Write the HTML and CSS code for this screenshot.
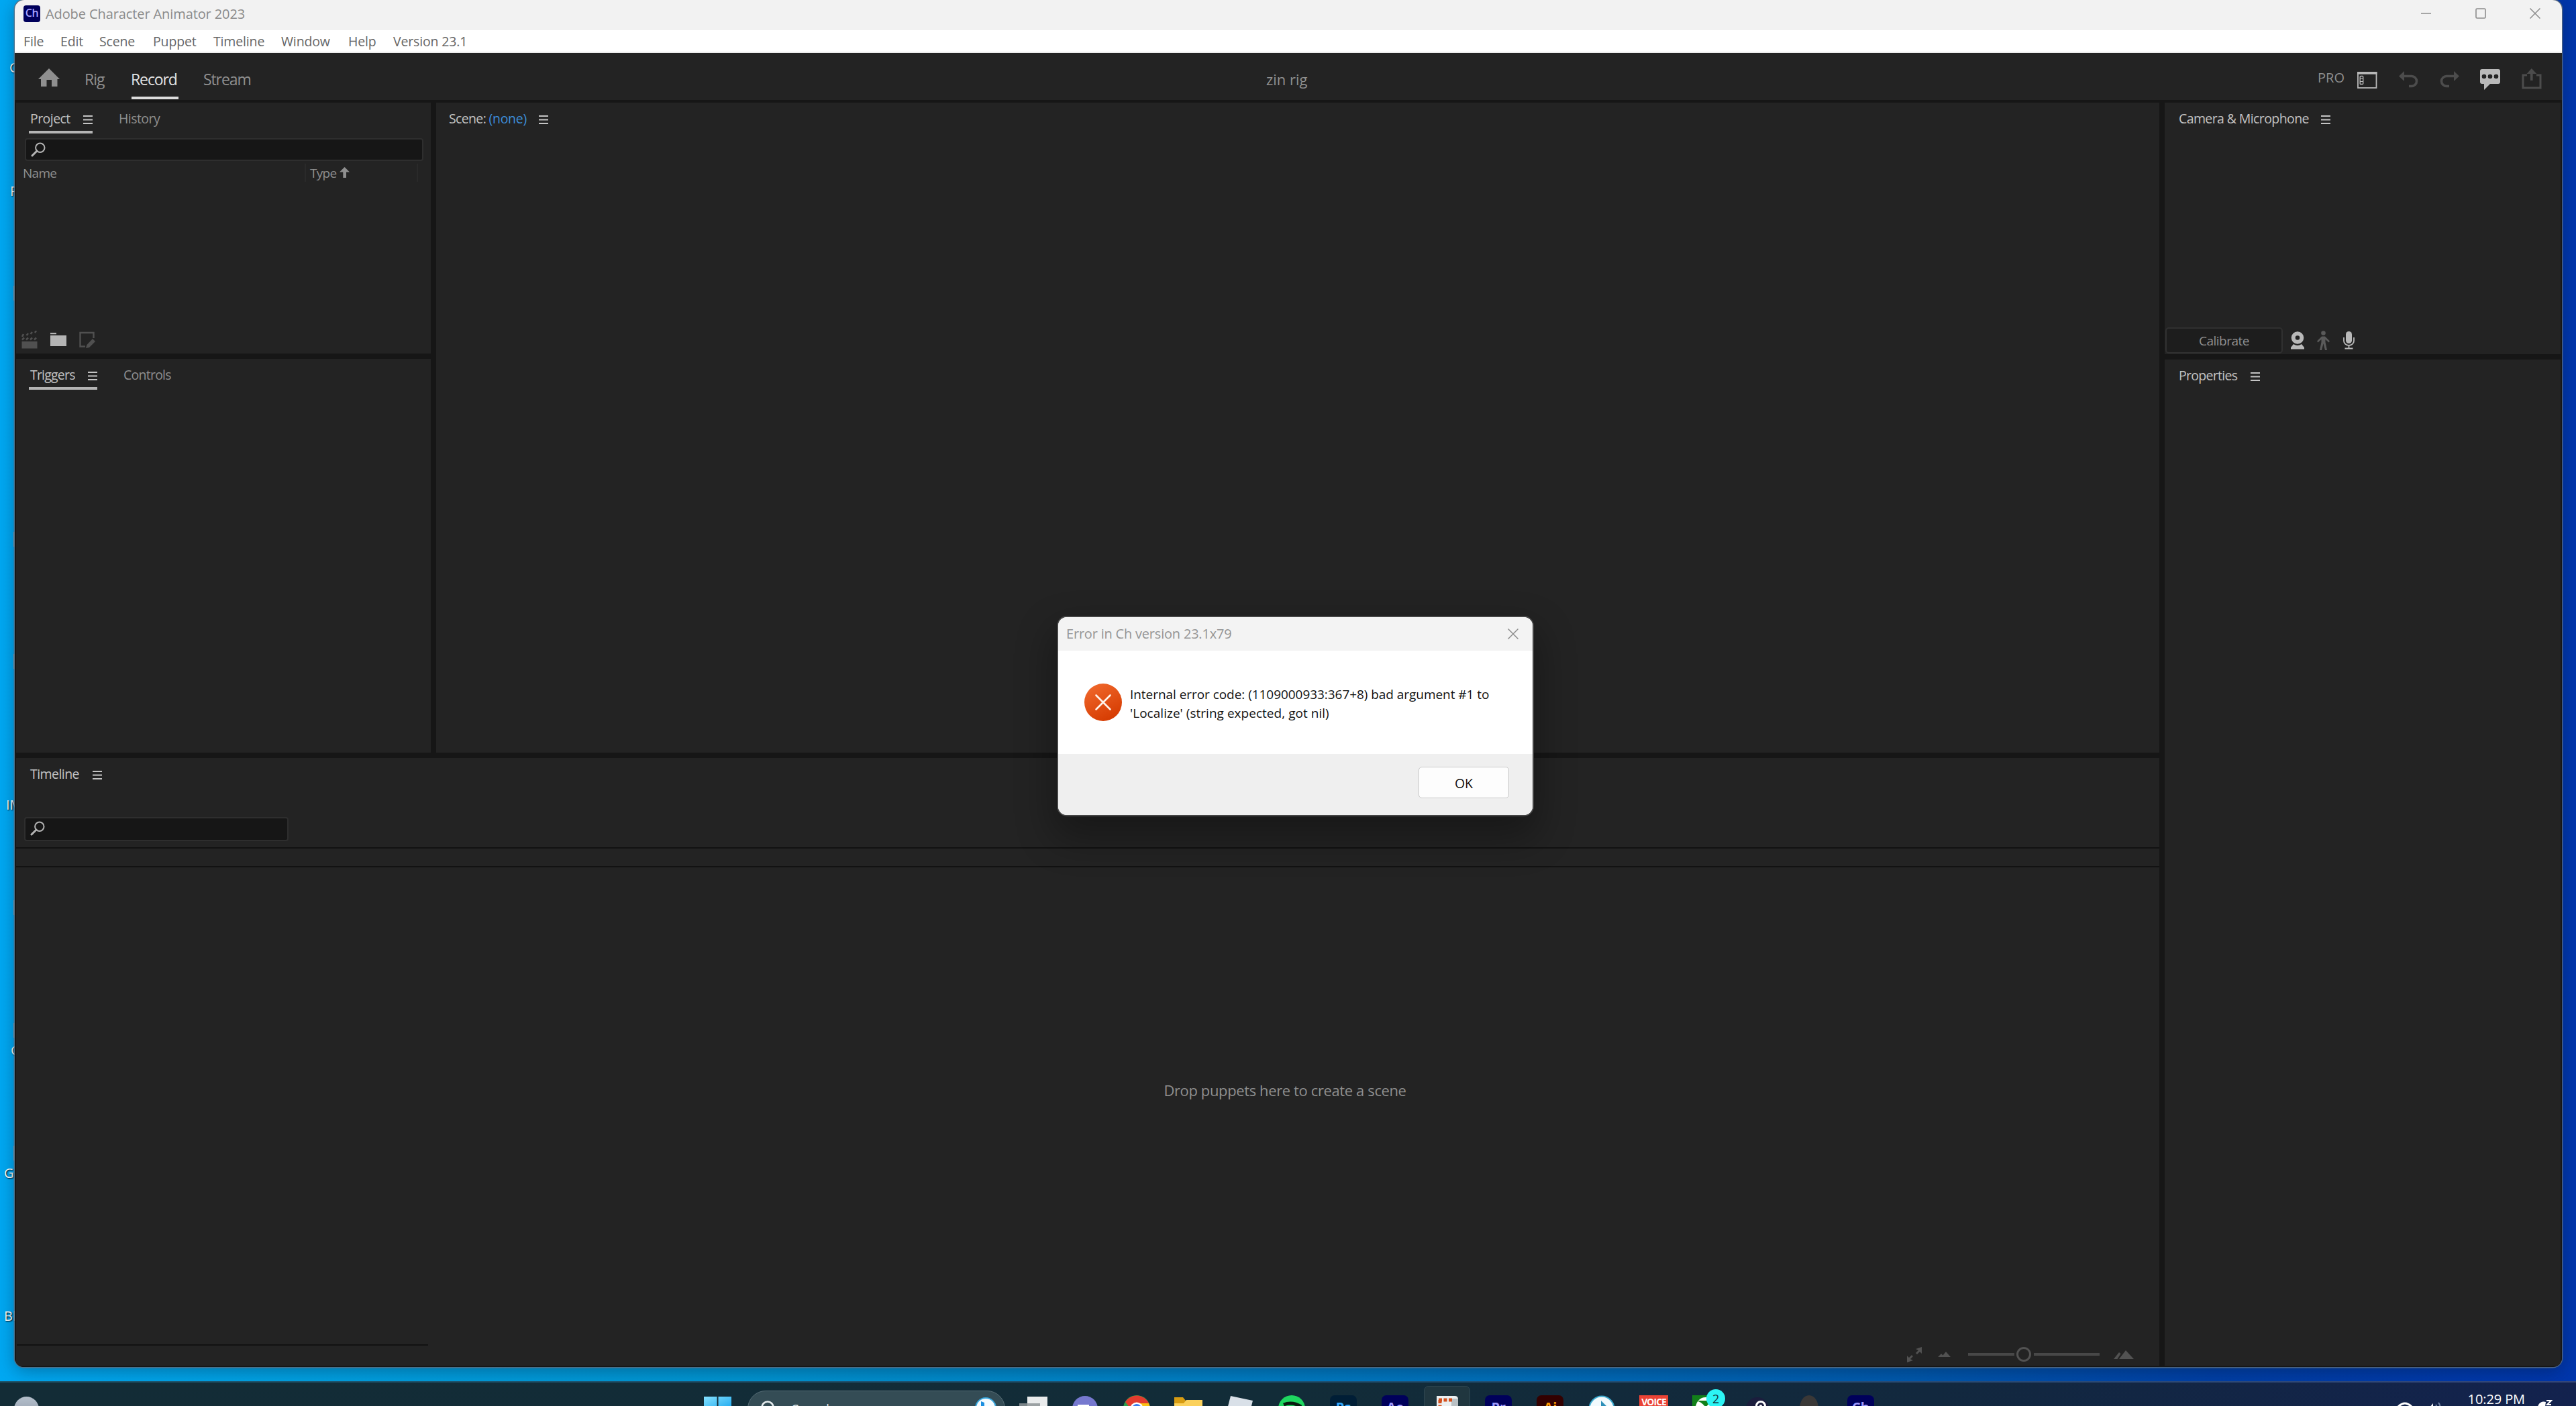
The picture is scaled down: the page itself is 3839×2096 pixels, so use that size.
FILE: index.html
```
<!DOCTYPE html>
<html lang="en">
<head>
    <meta charset="UTF-8">
    <meta name="viewport" content="width=device-width, initial-scale=1.0">
    <title>Adobe Character Animator 2023</title>
    <link rel="stylesheet" href="styles.css">
</head>
<body>
    <svg class="defs" width="0" height="0">
        <symbol id="menu" viewBox="0 0 14 13">
            <path d="M0 1h14M0 6.5h14M0 12h14" stroke="currentColor" stroke-width="1.8"/>
        </symbol>
        <symbol id="search" viewBox="0 0 22 22">
            <ellipse cx="13.8" cy="8.3" rx="6.7" ry="6.7" fill="none" stroke="#b4b4b4" stroke-width="2"/>
            <path d="M9 13L2 20" stroke="#b4b4b4" stroke-width="3" stroke-linecap="round"/>
        </symbol>
    </svg>

    <div class="desktop">
        <!-- desktop shortcut labels, mostly hidden by the window -->
        <span class="shortcut s1">C</span>
        <span class="shortcut s2">P</span>
        <span class="shortcut s3">IM</span>
        <span class="shortcut s4">G</span>
        <span class="shortcut s5">Gr</span>
        <span class="shortcut s6">Bl</span>
        <i class="tick t1"></i>
        <i class="tick t2"></i>
        <i class="tick t3"></i>
        <i class="tick t4"></i>
        <i class="tick t5"></i>
        <i class="tick t6"></i>

        <div class="window">
            <header class="titlebar">
                <span class="app-icon">Ch</span>
                <span class="app-title">Adobe Character Animator 2023</span>
                <div class="window-buttons">
                    <svg width="16" height="16"><path d="M0 8h15" stroke="#8c8c8c" stroke-width="1.4"/></svg>
                    <svg width="16" height="16"><rect x="1" y="1" width="14" height="14" rx="1.5" fill="none" stroke="#8c8c8c" stroke-width="1.6"/></svg>
                    <svg width="16" height="16"><path d="M0.5 0.5l15 15M15.5 0.5l-15 15" stroke="#8c8c8c" stroke-width="1.5"/></svg>
                </div>
            </header>

            <nav class="menubar">
                <span class="m-file">File</span>
                <span class="m-edit">Edit</span>
                <span class="m-scene">Scene</span>
                <span class="m-puppet">Puppet</span>
                <span class="m-timeline">Timeline</span>
                <span class="m-window">Window</span>
                <span class="m-help">Help</span>
                <span>Version 23.1</span>
            </nav>

            <div class="toolbar">
                <svg class="home" width="32" height="28" viewBox="0 0 32 28">
                    <path d="M16 0L32 16H28.5V27H20V17h-7.500v10H4V16H0z" fill="#8f8f8f"/>
                </svg>
                <span class="mode rig">Rig</span>
                <span class="mode record active">Record</span>
                <span class="mode stream">Stream</span>
                <span class="project-name">zin rig</span>
                <div class="tools">
                    <span class="pro">PRO</span>
                    <svg class="t-layout" width="30" height="25" viewBox="0 0 30 25">
                        <rect x="1" y="1" width="27.500" height="23" fill="none" stroke="#b9b9b9" stroke-width="1.8"/>
                        <path d="M0 2h29.500" stroke="#b9b9b9" stroke-width="3.500"/>
                        <rect x="4.200" y="6.500" width="4.500" height="12" rx="1" fill="none" stroke="#b9b9b9" stroke-width="1.4"/>
                        <path d="M4 10.500h5M4 14.500h5" stroke="#b9b9b9"/>
                    </svg>
                    <svg class="t-undo" width="30" height="25" viewBox="0 0 30 25">
                        <path d="M0 7.500L8 0v15z" fill="#4c4c4c"/>
                        <path d="M7 7.500h12a7.500 7.500 0 0 1 0 15h-4" fill="none" stroke="#4c4c4c" stroke-width="3.600"/>
                    </svg>
                    <svg class="t-redo" width="30" height="25" viewBox="0 0 30 25">
                        <path d="M29 7.500L21 0v15z" fill="#4c4c4c"/>
                        <path d="M22 7.500H10a7.500 7.500 0 0 0 0 15h4" fill="none" stroke="#4c4c4c" stroke-width="3.600"/>
                    </svg>
                    <svg class="t-chat" width="30" height="31" viewBox="0 0 30 31">
                        <path d="M3 0h24q3 0 3 3v16q0 3-3 3H15l-9 9v-9H3q-3 0-3-3V3q0-3 3-3z" fill="#b9b9b9"/>
                        <circle cx="6" cy="11" r="3.300" fill="#232323"/>
                        <circle cx="15" cy="11" r="3.300" fill="#232323"/>
                        <circle cx="24" cy="11" r="3.300" fill="#232323"/>
                    </svg>
                    <svg class="t-share" width="30" height="31" viewBox="0 0 30 31">
                        <path d="M8 10H2v19h26V10h-6" fill="none" stroke="#4c4c4c" stroke-width="3"/>
                        <path d="M14.800 18V5" stroke="#4c4c4c" stroke-width="3.600"/>
                        <path d="M7.500 8L14.800 0l7.500 8z" fill="#4c4c4c"/>
                    </svg>
                </div>
            </div>

            <main class="workspace">
                <div class="main-column">
                    <div class="upper">
                        <div class="left-column">
                            <section class="panel project">
                                <div class="tabs">
                                    <span class="tab active tab-project">Project<svg class="burger"><use href="#menu"/></svg></span>
                                    <span class="tab">History</span>
                                </div>
                                <div class="searchbox"><svg><use href="#search"/></svg></div>
                                <div class="columns">
                                    <span class="col-name">Name</span>
                                    <span class="col-type">Type
                                        <svg width="15" height="16" viewBox="0 0 15 16"><path d="M7.500 0L15 7.500h-5V16H5.300V7.500H0z" fill="#8f8f8f"/></svg>
                                    </span>
                                </div>
                                <div class="project-actions">
                                    <svg width="24" height="27" viewBox="0 0 24 27">
                                        <path d="M0.500 16h23v10.500H0.500z" fill="#505050"/>
                                        <path d="M1 13.500l3-3M7 13.500l3-3M13 13.500l3-3M19 13.500l3-3M1 9l2-4M7.500 7l2.500-3M13.500 5l2.500-3M20 3l2-3" stroke="#505050" stroke-width="2.600"/>
                                    </svg>
                                    <svg width="26" height="21" viewBox="0 0 26 21">
                                        <path d="M1 0h9v2.200H1zM1 4h24v16H1z" fill="#b4b4b4"/>
                                    </svg>
                                    <svg width="24" height="25" viewBox="0 0 24 25">
                                        <path d="M9 22.500H1.500V2h20v8" fill="none" stroke="#505050" stroke-width="2.400"/>
                                        <path d="M20 11l4 4-9 9-5 1 1.500-5z" fill="#505050"/>
                                    </svg>
                                </div>
                            </section>
                            <section class="panel triggers">
                                <div class="tabs">
                                    <span class="tab active tab-triggers">Triggers<svg class="burger"><use href="#menu"/></svg></span>
                                    <span class="tab tab-controls">Controls</span>
                                </div>
                            </section>
                        </div>
                        <section class="panel scene">
                            <div class="tabs">
                                <span class="tab light">Scene: <b>(none)</b><svg class="burger"><use href="#menu"/></svg></span>
                            </div>
                        </section>
                    </div>

                    <section class="panel timeline">
                        <div class="tabs">
                            <span class="tab light">Timeline<svg class="burger"><use href="#menu"/></svg></span>
                        </div>
                        <div class="searchbox"><svg><use href="#search"/></svg></div>
                        <div class="ruler"></div>
                        <div class="drop-area">Drop puppets here to create a scene</div>
                        <div class="zoom-bar">
                            <svg class="fit" width="22" height="23" viewBox="0 0 22 23">
                                <path d="M13 3l9-3v10l-3-3-4 4-2-2 4-4zM9 20l-9 3V13l3 3 4-4 2 2-4 4z" fill="#525252"/>
                            </svg>
                            <svg class="zoom-out" width="19" height="8" viewBox="0 0 19 8"><path d="M0 8l5-5 2.500 2.500L12 0l7 8z" fill="#525252"/></svg>
                            <div class="slider"><i></i></div>
                            <svg class="zoom-in" width="30" height="13" viewBox="0 0 30 13"><path d="M0 13L8 3l2.500 2-5 8zM8 13L18 0l12 13z" fill="#525252"/></svg>
                        </div>
                    </section>
                </div>

                <div class="right-column">
                    <section class="panel camera">
                        <div class="tabs">
                            <span class="tab light">Camera &amp; Microphone<svg class="burger"><use href="#menu"/></svg></span>
                        </div>
                        <div class="camera-bar">
                            <button class="calibrate">Calibrate</button>
                            <svg class="webcam" width="20" height="27" viewBox="0 0 20 27">
                                <circle cx="10" cy="9.500" r="6.300" fill="none" stroke="#b9b9b9" stroke-width="6"/>
                                <path d="M4 19q6 4 12 0l4 5v2.500H0V24z" fill="#b9b9b9"/>
                            </svg>
                            <svg class="body" width="19" height="30" viewBox="0 0 19 30">
                                <circle cx="9.500" cy="3.500" r="3.300" fill="#5a5a5a"/>
                                <path d="M7 8.500h5l7 7-1.500 2L12.500 13v4L15 29h-3L9.500 19 7 29H4l2.500-12v-4l-5 4.500L0 15.500z" fill="#5a5a5a"/>
                            </svg>
                            <svg class="mic" width="17" height="27" viewBox="0 0 17 27">
                                <rect x="4" y="0" width="9" height="18" rx="4.500" fill="#b9b9b9"/>
                                <path d="M1 9v5a7.500 7 0 0 0 15 0V9M8.500 21v4M2.500 25.500h12" fill="none" stroke="#b9b9b9" stroke-width="1.800"/>
                            </svg>
                        </div>
                    </section>
                    <section class="panel properties">
                        <div class="tabs">
                            <span class="tab light">Properties<svg class="burger"><use href="#menu"/></svg></span>
                        </div>
                    </section>
                </div>
            </main>
        </div>

        <div class="dialog" role="alertdialog">
            <div class="dialog-title">
                <span>Error in Ch version 23.1x79</span>
                <svg width="16" height="16"><path d="M0.500 0.500l15 15M15.500 0.500l-15 15" stroke="#8c8c8c" stroke-width="1.500"/></svg>
            </div>
            <div class="dialog-body">
                <svg width="56" height="56" viewBox="0 0 56 56">
                    <defs>
                        <linearGradient id="err" x1="0.2" y1="0" x2="0.7" y2="1">
                            <stop offset="0" stop-color="#f0682c"/>
                            <stop offset="1" stop-color="#d53a00"/>
                        </linearGradient>
                    </defs>
                    <circle cx="28" cy="28" r="28" fill="url(#err)"/>
                    <path d="M17.500 17.500l21 21M38.500 17.500l-21 21" stroke="#fff3ea" stroke-width="2.600" stroke-linecap="round"/>
                </svg>
                <p>Internal error code: (1109000933:367+8) bad argument #1 to<br><span>'Localize' (string expected, got nil)</span></p>
            </div>
            <div class="dialog-footer">
                <button class="ok">OK</button>
            </div>
        </div>
    </div>

    <footer class="taskbar">
        <div class="weather"></div>
        <svg class="start" width="41" height="40" viewBox="0 0 41 40">
            <defs>
                <linearGradient id="win" x1="0" y1="0" x2="1" y2="1">
                    <stop offset="0" stop-color="#86e2ff"/>
                    <stop offset="1" stop-color="#1aa6ee"/>
                </linearGradient>
            </defs>
            <path d="M0 1h19.500v19H0zM21.500 1H41v19H21.500z" fill="url(#win)"/>
        </svg>
        <div class="task-search">
            <svg width="24" height="24" viewBox="0 0 24 24"><circle cx="11" cy="10" r="8.500" fill="none" stroke="#e8eef0" stroke-width="2.600"/></svg>
            <span>Search</span>
            <svg class="bing" width="32" height="32" viewBox="0 0 32 32">
                <circle cx="16" cy="16" r="15" fill="#f4fbff" stroke="#36a5dc" stroke-width="2"/>
                <path d="M9 6l5 2v10l7 3-8 5-4-3z" fill="#1b8fe0"/>
            </svg>
        </div>
        <div class="apps">
            <span class="app"><svg width="42" height="40"><path d="M12 2h30v38H12z" fill="#e9ebec"/><path d="M0 12h31v28H0z" fill="#8d9496" opacity=".85"/></svg></span>
            <span class="app"><svg width="40" height="40"><circle cx="20" cy="20" r="19" fill="#7678cf"/><path d="M9 14h17v5H9z" fill="#fff"/></svg></span>
            <span class="app">
                <svg width="40" height="40"><circle cx="20" cy="20" r="20" fill="#2ba24c"/><path d="M3 10A20 20 0 0 1 39 14H20l-6 10z" fill="#e33b2e"/><path d="M20 12h18a20 20 0 0 1 2 10H24z" fill="#fbc116"/><circle cx="20" cy="20" r="9.500" fill="#fff"/><circle cx="20" cy="20" r="7" fill="#3b7ded"/></svg>
            </span>
            <span class="app"><svg width="42" height="40"><path d="M0 3h13l4 5h8v8H0z" fill="#d79c12"/><path d="M0 12h14l4-5h24v33H0z" fill="#fbd15c"/></svg></span>
            <span class="app"><svg width="40" height="40"><path d="M6 1l33 7-8 32H-4z" fill="#d9e0e8"/></svg></span>
            <span class="app"><svg width="40" height="40"><circle cx="20" cy="20" r="20" fill="#1ed760"/><path d="M8 14q13-5 26 3" fill="none" stroke="#0a1a10" stroke-width="5"/></svg></span>
            <span class="app"><span class="adobe ps">Ps</span></span>
            <span class="app"><span class="adobe">Ae</span></span>
            <span class="app current"><svg width="34" height="40"><path d="M2 0h27q5 0 5 5v35H2z" fill="#eceff0"/><path d="M24 4h10v36H24z" fill="#b9c0c4"/><path d="M5 6h20M7 6v20" fill="none" stroke="#d5501c" stroke-width="5" stroke-dasharray="5 2.500"/></svg></span>
            <span class="app"><span class="adobe">Pr</span></span>
            <span class="app"><span class="adobe ai">Ai</span></span>
            <span class="app"><svg width="40" height="40"><circle cx="20" cy="20" r="18.500" fill="#f2fafd" stroke="#3aa9cf" stroke-width="2"/><path d="M7 16h12V8l10 10-10 8z" fill="#2c8fb8"/></svg></span>
            <span class="app"><span class="voice">VOICE</span></span>
            <span class="app">
                <svg width="40" height="40"><path d="M0 0h40v40H0z" fill="#12801a"/><circle cx="20" cy="18" r="15" fill="#fff"/><path d="M6 8q8 2 14 10Q27 9 34 8M9 30l11-13 11 13z" fill="#12801a"/></svg>
                <span class="badge">2</span>
            </span>
            <span class="app"><svg width="40" height="36"><circle cx="20" cy="20" r="17" fill="#1b1d3d"/><circle cx="25" cy="16" r="6.500" fill="none" stroke="#fff" stroke-width="3"/><circle cx="25" cy="16" r="2" fill="#fff"/></svg></span>
            <span class="app"><svg width="30" height="40"><ellipse cx="15" cy="20" rx="14" ry="20" fill="#3a3837"/></svg></span>
            <span class="app"><span class="adobe">Ch</span></span>
        </div>
        <div class="tray">
            <svg class="wifi" width="24" height="20"><path d="M1 8q11-12 22 0M5 13q7-7 14 0" fill="none" stroke="#fff" stroke-width="3"/></svg>
            <svg class="volume" width="22" height="20"><path d="M0 9h3l5-6v17H0z" fill="#fff"/><path d="M12 5q3 4 0 9M16 2q5 6 0 14" fill="none" stroke="#6d7fa0" stroke-width="2"/></svg>
            <span class="clock">10:29 PM</span>
            <svg class="bell" width="22" height="20"><path d="M0 20V11a9 9 0 0 1 12-8l-1 7h8v10z" fill="#fff"/><path d="M13 1h7l-6 6h6" fill="none" stroke="#fff" stroke-width="2"/></svg>
        </div>
    </footer>
</body>
</html>
```
FILE: styles.css
```
* {
    margin: 0;
    padding: 0;
    box-sizing: border-box;
}

body {
    width: 3839px;
    height: 2096px;
    overflow: hidden;
    font-family: "Open Sans", "Noto Sans", sans-serif;
    font-size: 20px;
    background: #0a4fa5;
}

svg {
    display: block;
    flex: none;
}

button {
    font: inherit;
}

.defs {
    position: absolute;
}

.desktop {
    position: relative;
    height: 2059px;
    padding-left: 22px;
    overflow: hidden;
    background: linear-gradient(90deg, #00a8f2 0, #00a2e4 400px, #0095d2 1100px, #0078c0 2000px, #0058ac 2850px, #003fa6 3300px, #0036ac 3839px);
}

/* shortcut labels peeking out at the left edge */
.shortcut {
    position: absolute;
    line-height: 28px;
    color: #fff;
    text-shadow: 1px 1px 2px #000;
}

.s1 { left: 14px; top: 87px; }
.s2 { left: 15px; top: 271px; }
.s3 { left: 9px; top: 1186px; }
.s4 { left: 16px; top: 1552px; }
.s5 { left: 6px; top: 1735px; }
.s6 { left: 6px; top: 1948px; }

.tick {
    position: absolute;
    left: 20px;
    width: 2px;
    height: 22px;
    background: #8fa3ad;
}

.t1 { top: 426px; }
.t2 { top: 793px; }
.t3 { top: 975px; }
.t4 { top: 1342px; }
.t5 { top: 1525px; }
.t6 { top: 1708px; }

.window {
    position: relative;
    width: 3796px;
    height: 2038px;
    border-radius: 14px;
    overflow: hidden;
    background: #161616;
    box-shadow: 0 0 0 1.5px rgba(90, 110, 130, 0.8), 0 6px 26px rgba(0, 20, 40, 0.35);
}

.titlebar {
    display: flex;
    align-items: center;
    height: 45px;
    padding: 0 32px 5px 13px;
    background: #f2f2f2;
    color: #8a8a8a;
}

.app-icon {
    width: 25px;
    height: 25px;
    margin-right: 8px;
    border-radius: 4px;
    background: #00005b;
    color: #a9a3ff;
    font-size: 16px;
    font-weight: 600;
    line-height: 23px;
    text-align: center;
    letter-spacing: -0.5px;
}

.app-title {
    letter-spacing: -0.1px;
}

.window-buttons {
    display: flex;
    gap: 65px;
    margin-left: auto;
}

.menubar {
    display: flex;
    height: 34px;
    padding-left: 13px;
    border-bottom: 2px solid #ececec;
    background: #fff;
    color: #666;
    font-size: 19.500px;
    line-height: 34px;
    letter-spacing: -0.15px;
}

.m-file { width: 55px; }
.m-edit { width: 58px; }
.m-scene { width: 80px; }
.m-puppet { width: 90px; }
.m-timeline { width: 101px; }
.m-window { width: 100px; }
.m-help { width: 67px; }

.toolbar {
    display: flex;
    align-items: flex-start;
    height: 70px;
    padding: 5px 30px 0 35px;
    background: #232323;
    color: #8f8f8f;
    font-size: 23px;
}

.home {
    margin-top: 18px;
}

.mode {
    height: 64px;
    line-height: 69px;
    letter-spacing: -1px;
}

.rig { margin-left: 37px; width: 31px; }
.record { margin-left: 39px; width: 70px; }

.stream {
    width: 70px;
    margin-left: 37px;
    letter-spacing: -1.1px;
}

.mode.active {
    color: #e2e2e2;
    letter-spacing: -1.1px;
    text-indent: -1px;
    box-shadow: inset 0 -4px #dcdcdc;
}

.project-name {
    width: 70px;
    margin-left: 1514px;
    line-height: 69px;
    font-size: 22px;
    letter-spacing: 0;
}

.tools {
    display: flex;
    align-items: flex-start;
    margin-left: auto;
}

.pro {
    margin: -3px 19px 0 0;
    line-height: 69px;
    font-size: 20px;
}

.t-layout { margin: 23px 32px 0 0; }
.t-undo { margin: 22px 31px 0 0; }
.t-redo { margin: 22px 30px 0 0; }
.t-chat { margin: 19px 32px 0 0; }
.t-share { margin-top: 18px; }

.workspace {
    display: flex;
    gap: 8px;
    height: 1889px;
    padding: 4px 2px 2px;
    background: #161616;
}

.main-column {
    display: flex;
    flex-direction: column;
    gap: 8px;
    width: 3194px;
}

.upper {
    display: flex;
    gap: 8px;
    height: 969px;
}

.left-column {
    display: flex;
    flex-direction: column;
    gap: 8px;
    width: 618px;
}

.right-column {
    display: flex;
    flex: 1;
    flex-direction: column;
    gap: 8px;
}

.panel {
    display: flex;
    flex-direction: column;
    background: #232323;
}

.project { height: 374px; }
.triggers, .scene, .timeline, .properties { flex: 1; }
.camera { height: 375px; }

.tabs {
    display: flex;
    height: 46px;
    padding-left: 19px;
    font-size: 19.500px;
    line-height: 47px;
}

.tab {
    display: flex;
    color: #8f8f8f;
    letter-spacing: -0.55px;
    white-space: pre;
}

.tab b {
    color: #3d8fdc;
    font-weight: 400;
    letter-spacing: -0.3px;
}

.tab.active {
    width: 95px;
    padding-left: 2px;
    color: #c4c4c4;
    box-shadow: inset 0 -4px #b4b4b4;
}

.tab-project {
    margin-right: 39px;
}

.tab.tab-triggers {
    width: 102px;
    letter-spacing: -0.8px;
}

.tab-controls {
    margin-left: 39px;
    letter-spacing: -0.75px;
}

.tab.light {
    color: #c4c4c4;
}

.burger {
    width: 14px;
    height: 13px;
    margin: 19px 0 0 auto;
}

.light .burger {
    margin-left: 18px;
}

.scene .tab.light {
    letter-spacing: -0.65px;
}

.timeline .tabs { padding-left: 21px; }
.camera .tabs, .properties .tabs { padding-left: 21px; }
.camera .tab { letter-spacing: -0.6px; }
.properties .tab { letter-spacing: -0.7px; }

.timeline .light .burger,
.properties .light .burger {
    margin-left: 20px;
}

.searchbox {
    width: 594px;
    height: 34px;
    margin: 7px 0 0 13px;
    padding: 4px 0 0 7px;
    border: 2px solid #2e2e2e;
    border-radius: 4px;
    background: #161616;
}

.searchbox svg {
    width: 22px;
    height: 22px;
}

.columns {
    display: flex;
    margin-top: 4px;
    height: 27px;
    padding-left: 10px;
    color: #8f8f8f;
    font-size: 19px;
    line-height: 28px;
    letter-spacing: -0.7px;
}

.col-name {
    width: 420px;
}

.col-type {
    display: flex;
    gap: 5px;
    width: 169px;
    padding-left: 6px;
    border: solid #2a2a2a;
    border-width: 0 2px;
}

.col-type svg {
    margin-top: 5px;
}

.project-actions {
    display: flex;
    align-items: center;
    gap: 18px;
    margin-top: auto;
    padding: 0 0 7px 8px;
}

.timeline .searchbox {
    width: 394px;
    height: 36px;
    margin: 42px 0 9px 12px;
}

.ruler {
    height: 30px;
    border: solid #121212;
    border-width: 2px 0;
}

.drop-area {
    display: flex;
    flex: 1;
    align-items: center;
    justify-content: center;
    padding: 0 26px 48px 614px;
    color: #8f8f8f;
    font-size: 22px;
    letter-spacing: -0.38px;
}

.zoom-bar {
    display: flex;
    align-items: center;
    justify-content: flex-end;
    height: 32px;
    padding: 0 38px 2px 0;
    background: linear-gradient(#121212, #121212) 1px 0 / 613px 2px no-repeat;
}

.fit { margin-right: 24px; }
.zoom-out { margin-right: 26px; }

.slider {
    display: flex;
    align-items: center;
    width: 196px;
    height: 22px;
    margin-right: 21px;
    background: linear-gradient(#484848, #484848) 0 9px / 69px 4px no-repeat, linear-gradient(#484848, #484848) 98px 9px / 98px 4px no-repeat;
}

.slider i {
    width: 22px;
    height: 22px;
    margin-left: 72px;
    border: 3px solid #525252;
    border-radius: 50%;
}

.camera-bar {
    display: flex;
    align-items: center;
    margin: auto 0 1px 1px;
}

.calibrate {
    width: 175px;
    height: 39px;
    border: 2px solid #303030;
    border-radius: 5px;
    background: #1d1d1d;
    color: #8f8f8f;
    font-size: 19px;
    letter-spacing: -0.5px;
}

.webcam { margin-left: 12px; }
.body { margin-left: 19px; }
.mic { margin-left: 20px; }

/* error dialog, floats over the app */
.dialog {
    position: absolute;
    left: 1577px;
    top: 920px;
    width: 707px;
    height: 295px;
    border-radius: 13px;
    background: #fff;
    box-shadow: 0 0 0 2px #454545, 0 26px 56px 8px rgba(0, 0, 0, 0.32);
    overflow: hidden;
}

.dialog-title {
    display: flex;
    justify-content: space-between;
    height: 50px;
    padding: 0 21px 0 12px;
    background: #f3f3f3;
    color: #959595;
    line-height: 50px;
    letter-spacing: -0.2px;
}

.dialog-title svg {
    margin-top: 17px;
}

.dialog-body {
    display: flex;
    gap: 12px;
    height: 154px;
    padding: 49px 0 0 39px;
}

.dialog-body p {
    padding-top: 2px;
    color: #111;
    font-size: 19px;
    line-height: 28px;
    letter-spacing: -0.05px;
    white-space: nowrap;
}

.dialog-body span {
    letter-spacing: 0.03px;
}

.dialog-footer {
    display: flex;
    justify-content: flex-end;
    height: 91px;
    padding: 19px 35px 0 0;
    background: #efefef;
}

.ok {
    width: 135px;
    height: 47px;
    padding-top: 2px;
    border: 1px solid #c9c9c9;
    border-radius: 5px;
    background: #fdfdfd;
    color: #111;
    font-size: 19.500px;
}

.taskbar {
    display: flex;
    align-items: flex-start;
    height: 37px;
    border-top: 2px solid #2a5468;
    border-image: linear-gradient(90deg, #1f5468, #1d5070 50%, #34467a) 1;
    background: linear-gradient(90deg, #132c36, #122c38 50%, #12283e 75%, #13224e);
    overflow: hidden;
}

.weather {
    width: 37px;
    height: 37px;
    margin: 21px 991px 0 21px;
    border-radius: 50%;
    background: linear-gradient(#b4bfcb, #8f98a8);
    flex: none;
}

.start {
    margin: 20px 24px 0 0;
}

.task-search {
    display: flex;
    align-items: flex-start;
    flex: none;
    width: 384px;
    height: 54px;
    margin: 12px 3px 0 0;
    padding: 0 12px 0 18px;
    border: 1px solid #566c75;
    border-radius: 27px;
    background: #344c55;
    color: #dfe6e8;
    line-height: 53px;
}

.task-search svg {
    margin: 14px 23px 0 0;
}

.task-search .bing {
    margin: 9px 0 0 auto;
}

.apps {
    display: flex;
    flex: none;
}

.app {
    position: relative;
    display: flex;
    justify-content: center;
    width: 77.100px;
    height: 80px;
    padding-top: 19px;
}

.current {
    width: 69px;
    margin: 5px 4px 0 4px;
    padding-top: 14px;
    border: 1px solid #2f4853;
    border-radius: 7px;
    background: #20363f;
}

.adobe {
    width: 40px;
    height: 40px;
    border-radius: 7px;
    background: #00005b;
    color: #9e9bff;
    font-size: 20px;
    font-weight: 700;
    line-height: 35px;
    text-align: center;
}

.ps {
    background: #001e36;
    color: #31a8ff;
}

.ai {
    background: #330000;
    color: #ff9a00;
}

.voice {
    width: 43px;
    height: 40px;
    background: #ea4335;
    color: #fff;
    font-size: 14px;
    font-weight: 700;
    line-height: 20px;
    text-align: center;
    letter-spacing: -1px;
}

.badge {
    position: absolute;
    left: 40px;
    top: 10px;
    width: 28px;
    height: 28px;
    border-radius: 50%;
    background: #2cf5f5;
    color: #10303c;
    font-size: 18px;
    line-height: 28px;
    text-align: center;
}

.tray {
    display: flex;
    margin-left: auto;
    padding-right: 35px;
    color: #fff;
}

.wifi { margin: 29px 22px 0 0; }
.volume { margin: 28px 38px 0 0; }

.clock {
    height: 34px;
    margin: 12px 19px 0 0;
    line-height: 25px;
    letter-spacing: -0.1px;
    white-space: nowrap;
}

.bell { margin-top: 26px; }
```
